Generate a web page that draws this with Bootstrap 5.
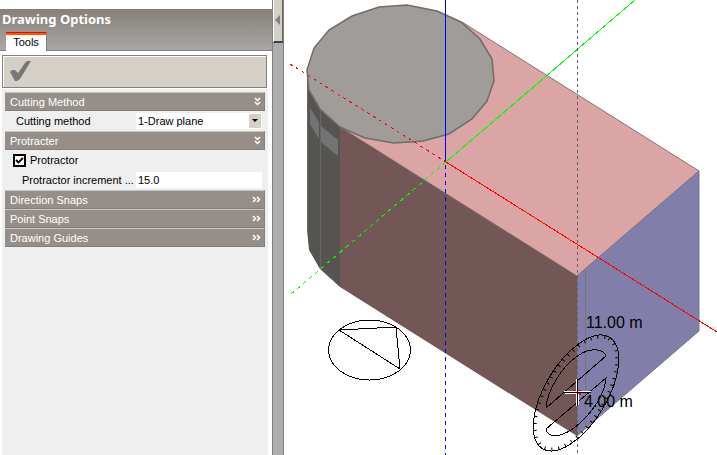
<!DOCTYPE html>
<html lang="en">
<head>
<meta charset="utf-8">
<meta name="viewport" content="width=device-width, initial-scale=1">
<title>Drawing Options</title>
<link href="https://cdn.jsdelivr.net/npm/bootstrap@5.3.0/dist/css/bootstrap.min.css" rel="stylesheet">
<style>
body { font-family: "Liberation Sans", Arial, sans-serif; font-size: 11px; line-height: 16px; color: #000; background: #fff; }
.side-panel { width: 272px; background: #fff; }
.panel-head { margin-top: 9px; height: 42px; background: linear-gradient(#857f78, #a9a8a6); border-bottom: 1px solid #808080; }
.panel-title { font: bold 13px/20px "Noto Sans", "DejaVu Sans", sans-serif; color: #fff; padding-left: 2px; }
.tab-row { padding-left: 6px; }
.tool-tab { width: 41px; height: 19px; border: 0; border-top: 1px solid #f00; border-right: 1px solid #808080; background: linear-gradient(#ff5a00 2px, #fff 2px); margin-bottom: -1px; font-size: 11px; line-height: 16px; }
.tool-strip { height: 33px; margin: 4px 5px 0 2px; background: #d4d0c8; border: 1px solid #808080; box-shadow: inset 1px 1px #fff; }
.tool-strip button { border: 0; background: none; padding: 0 6px; }
.options-body { margin: 1px 4px 0 2px; background: #efefef; padding: 3px; }
.group-head { height: 19px; border: 0; border-top: 1px solid #c9c6c1; border-bottom: 1px solid #808080; border-right: 1px solid #808080; background: #968f89; color: #fff; padding: 0 3px 0 5px; font-size: 11px; line-height: 16px; }
.option-row { height: 20px; }
.value-row { padding: 0 3px; }
.value-row label { white-space: nowrap; padding-left: 8px; }
.value-row .sub-label { padding-left: 14px; }
.field { width: 126px; height: 16px; border: 0; border-radius: 0; background-color: #fff; padding: 0 2px; font-size: 11px; line-height: 16px; color: #000; }
.pick { appearance: none; background: #fff url("data:image/svg+xml,%3Csvg xmlns='http://www.w3.org/2000/svg' width='12' height='14'%3E%3Cpath fill='%23d4d0c8' d='M0 0h12v14H0z'/%3E%3Cpath d='M3 5h6L6 8z'/%3E%3C/svg%3E") no-repeat right 1px center; }
.tick { appearance: none; width: 13px; height: 13px; border: 2px solid #000; background: #fff; margin: 0; }
.tick:checked { background: #fff url("data:image/svg+xml,%3Csvg xmlns='http://www.w3.org/2000/svg' viewBox='0 0 9 9'%3E%3Cpath d='M1 4l2.500 2.500L8 2' fill='none' stroke='%23000' stroke-width='1.800'/%3E%3C/svg%3E") center/9px no-repeat; }
.splitter { width: 12px; background: #adadad; border-left: 1px solid #808080; border-right: 1px solid #808080; }
.splitter button { width: 10px; height: 43px; border: 0; border-left: 1px solid #fff; border-right: 1px solid #666; border-bottom: 2px solid #404040; background: #d4d0c8; }
.scene text { font: 16px "Liberation Sans", Arial, sans-serif; }
</style>
<script src="https://cdn.jsdelivr.net/npm/bootstrap@5.3.0/dist/js/bootstrap.bundle.min.js"></script>
</head>
<body>
<div class="d-flex vh-100 overflow-hidden">
  <aside class="side-panel d-flex flex-column flex-shrink-0">
    <header class="panel-head d-flex flex-column justify-content-between flex-shrink-0">
      <h1 class="panel-title m-0">Drawing Options</h1>
      <div class="tab-row d-flex"><button type="button" class="tool-tab p-0">Tools</button></div>
    </header>
    <div class="tool-strip d-flex align-items-center flex-shrink-0">
      <button type="button" class="d-flex" aria-label="Apply">
        <svg width="22" height="21" viewBox="0 0 22 21"><path d="M1 11L3 9H6L9 12L16 2L18 0H22L11 18L8 20H6Z" fill="#777"/></svg>
      </button>
    </div>
    <form class="options-body flex-grow-1">
      <button type="button" class="group-head w-100 d-flex align-items-center justify-content-between"><span>Cutting Method</span>
        <svg width="7" height="9" viewBox="0 0 7 9" fill="none" stroke="#fff" stroke-width="1.500"><path d="M1 1l2.500 2.500L6 1M1 5l2.500 2.500L6 5"/></svg></button>
      <div class="option-row value-row d-flex align-items-center justify-content-between">
        <label for="method">Cutting method</label>
        <select id="method" class="field pick"><option>1-Draw plane</option></select>
      </div>
      <button type="button" class="group-head w-100 d-flex align-items-center justify-content-between"><span>Protracter</span>
        <svg width="7" height="9" viewBox="0 0 7 9" fill="none" stroke="#fff" stroke-width="1.500"><path d="M1 1l2.500 2.500L6 1M1 5l2.500 2.500L6 5"/></svg></button>
      <div class="option-row d-flex align-items-center gap-1 px-2">
        <input type="checkbox" id="protractor" class="tick" checked>
        <label for="protractor">Protractor</label>
      </div>
      <div class="option-row value-row d-flex align-items-center justify-content-between">
        <label class="sub-label" for="increment">Protractor increment ...</label>
        <input type="text" id="increment" class="field" value="15.0">
      </div>
      <button type="button" class="group-head w-100 d-flex align-items-center justify-content-between"><span>Direction Snaps</span>
        <svg width="9" height="7" viewBox="0 0 9 7" fill="none" stroke="#fff" stroke-width="1.500"><path d="M1 1l2.500 2.500L1 6M5 1l2.500 2.500L5 6"/></svg></button>
      <button type="button" class="group-head w-100 d-flex align-items-center justify-content-between"><span>Point Snaps</span>
        <svg width="9" height="7" viewBox="0 0 9 7" fill="none" stroke="#fff" stroke-width="1.500"><path d="M1 1l2.500 2.500L1 6M5 1l2.500 2.500L5 6"/></svg></button>
      <button type="button" class="group-head w-100 d-flex align-items-center justify-content-between"><span>Drawing Guides</span>
        <svg width="9" height="7" viewBox="0 0 9 7" fill="none" stroke="#fff" stroke-width="1.500"><path d="M1 1l2.500 2.500L1 6M5 1l2.500 2.500L5 6"/></svg></button>
    </form>
  </aside>
  <div class="splitter flex-shrink-0">
    <button type="button" class="d-block p-0" aria-label="Collapse panel"><svg class="d-block" width="7" height="20" viewBox="0 0 7 20"><path d="M1 9L6 4V14Z" fill="#808080"/></svg></button>
  </div>
  <main class="flex-grow-1 overflow-hidden">
    <svg class="scene d-block w-100 h-100" viewBox="284 0 433 455" preserveAspectRatio="xMinYMin meet" role="img" aria-label="Model view">
      <path d="M462 22L699 171L577 276L340 127Z" fill="#dba5a5" stroke="#8a7070"/>
      <path d="M577 276L699 171V331L577 436Z" fill="#817fa9" stroke="#77748f"/>
      <path d="M340 127L577 276V436L340 287Z" fill="#735757"/>
      <path d="M307 70V230L309 250L320 269L340 287V127L320 109Z" fill="#555450"/>
      <path d="M307.500 76V230M320.500 110V269" stroke="#686763" fill="none"/>
      <path d="M310 108L319 122V139L310 124ZM321 126L338 140V156L321 142Z" fill="#737375"/>
      <path d="M307 70L314 48L329 30L352 16L379 7L407 5L437 11L461 22L480 39L492 59L494 81L487 101L472 119L449 134L423 141L394 143L365 138L340 127L320 109L309 90Z" fill="#a09c9a" stroke="#6e6c6a" stroke-width="1.500"/>
      <g fill="none" shape-rendering="crispEdges">
        <path d="M445.500 0V162" stroke="#00f"/>
        <path d="M445.500 165V455" stroke="#00f" stroke-dasharray="4 4"/>
        <path d="M290 64L446 162" stroke="red" stroke-dasharray="3 4"/>
        <path d="M446 162L717 332" stroke="red"/>
        <path d="M635 0L446 162" stroke="#0f0"/>
        <path d="M446 162L290 295" stroke="#0f0" stroke-dasharray="4 4"/>
        <path d="M577.500 0V455" stroke="#665f66" stroke-dasharray="3 3"/>
        <path d="M585.500 270V428" stroke="#777583"/>
        <g stroke="#000">
          <ellipse cx="369.500" cy="350" rx="41" ry="30"/>
          <path d="M339 330L396 327L400 369Z"/>
          <ellipse cx="576" cy="393" rx="65" ry="31" transform="rotate(-59 576 393)"/>
          <path d="M546 408C547 392 561 366 579 355C591 347 604 349 606 356L546 408M546 429L606 378C605 394 592 414 574 428C560 438 548 438 546 429"/>
        </g>
      </g>
      <ellipse cx="576" cy="393" rx="63" ry="29" transform="rotate(-59 576 393)" fill="none" stroke="#000" stroke-width="3" stroke-dasharray="1 6"/>
      <text x="586" y="328">11.00 m</text>
      <text x="584" y="407">4.00 m</text>
      <g fill="none" shape-rendering="crispEdges">
        <path d="M574 390h7v5h-7z" fill="red"/>
        <path d="M564 391.500H591M576.500 379V406" stroke="#fff"/>
        <path d="M564 392.500H591M577.500 379V406" stroke="#000"/>
        <path d="M565 393.500H577M578.500 394V405" stroke="#fff"/>
      </g>
    </svg>
  </main>
</div>
</body>
</html>
